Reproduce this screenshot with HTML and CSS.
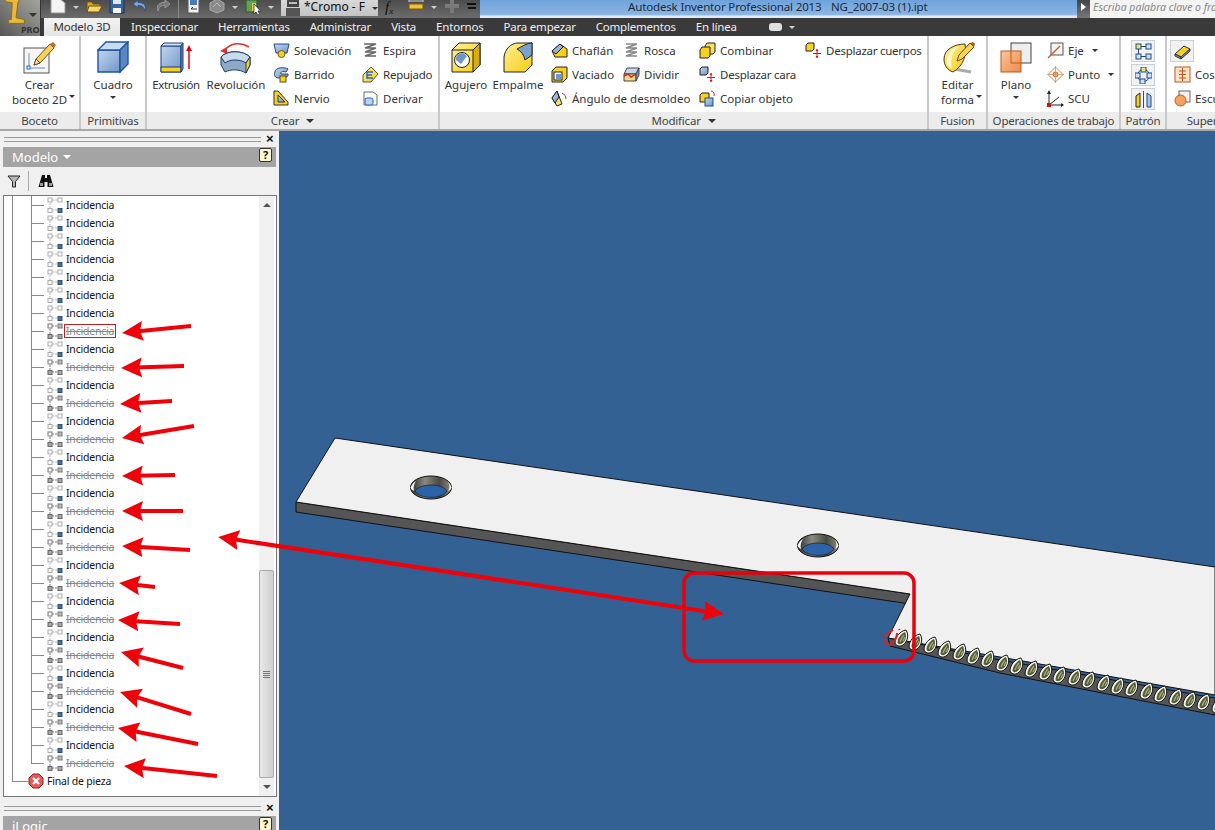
FILE: index.html
```html
<!DOCTYPE html>
<html lang="es">
<head>
<meta charset="utf-8">
<title>Autodesk Inventor Professional 2013</title>
<link rel="stylesheet" href="styles.css">
</head>
<body>
<svg class="defs" width="0" height="0">
  <defs>
    <linearGradient id="b" x1="0" y1="0" x2="1" y2="1"><stop offset="0" stop-color="#c4d6ee"/><stop offset="1" stop-color="#6f95c8"/></linearGradient>
    <linearGradient id="y" x1="0" y1="0" x2="1" y2="1"><stop offset="0" stop-color="#fff09a"/><stop offset="1" stop-color="#f8cc10"/></linearGradient>
    <linearGradient id="o" x1="0" y1="0" x2="1" y2="1"><stop offset="0" stop-color="#fbc79a"/><stop offset="1" stop-color="#ee8a48"/></linearGradient>
    <linearGradient id="hole" x1="0" y1="0" x2="1" y2="0"><stop offset="0" stop-color="#2b2b28"/><stop offset=".35" stop-color="#8a8a80"/><stop offset=".7" stop-color="#4a4a44"/><stop offset="1" stop-color="#8a8a80"/></linearGradient>
    <symbol id="on" viewBox="0 0 17 16"><path d="M4 3V13H6M6 3H11M6 13H11" fill="none" stroke="#b5b5b5" stroke-dasharray="2 1"/><rect x="2" y="1" width="4" height="4" fill="#fff" stroke="#aaa"/><rect x="12" y="1" width="4" height="4" fill="#fff" stroke="#aaa"/><rect x="2" y="11.500" width="4" height="4" fill="#fff" stroke="#aaa"/><rect x="12" y="11.500" width="4" height="4" fill="#3f76a6" stroke="#2f5070"/></symbol>
    <symbol id="off" viewBox="0 0 17 16"><path d="M4 3V13H6M6 3H11M6 13H11" fill="none" stroke="#777" stroke-dasharray="2 1"/><rect x="2" y="1" width="4" height="4" fill="#fff" stroke="#777"/><rect x="12" y="1" width="4" height="4" fill="#bbb" stroke="#777"/><rect x="2" y="11.500" width="4" height="4" fill="#aaa" stroke="#666"/><rect x="12" y="11.500" width="4" height="4" fill="#aaa" stroke="#666"/></symbol>
    <symbol id="tooth" viewBox="0 -3 15 22"><path d="M1 13C1 7 6 1 12 0C15 5 14 11 9 15C6 17 2 16 1 13Z" fill="#f5f5f0" stroke="#111"/><path d="M3.500 13C3.500 8 7 4 11 2C13 6 12 11 8 13.500C6.500 14.500 5 14.500 3.500 13Z" fill="#535c34"/><path d="M6 12C7 9 8 7 10 5M9 11C10 9 10.500 8 11 7" fill="none" stroke="#a8ae88" stroke-width="1.200"/></symbol>
    <marker id="ah" viewBox="0 0 21 20" refX="7" refY="10" markerWidth="21" markerHeight="20" markerUnits="userSpaceOnUse" orient="auto-start-reverse"><path d="M21 10L0 0L3 10L0 20Z" fill="#f00008"/></marker>
  </defs>
</svg>

<header class="titlebar">
  <div class="qa">
    <svg class="qi" viewBox="0 0 16 16"><path d="M1 1H10L15 5V15H1Z" fill="#f4f4f4" stroke="#999"/></svg><i class="caret lt"></i>
    <svg class="qi" viewBox="0 0 16 16"><path d="M1 4H6L7 6H14V13H1Z" fill="#d9a930" stroke="#6e5210"/><path d="M3 8H16L13 14H1Z" fill="#f5d86a" stroke="#6e5210"/></svg>
    <svg class="qi" viewBox="0 0 16 16"><path d="M1 1H15V15H1Z" fill="#3a659c" stroke="#1d3358"/><rect x="4" y="1" width="8" height="5" fill="#dfe7f2"/><rect x="4" y="10" width="8" height="5" fill="#f4f4f4"/></svg>
    <svg class="qi" viewBox="0 0 16 16"><path d="M6 2L1 6L6 10V7.500C10 7.500 12 9 13 13C15 8 12 4 6 4.500Z" fill="#7fa5d6" stroke="#2e5486"/></svg>
    <svg class="qi" viewBox="0 0 16 16"><path d="M10 2L15 6L10 10V7.500C6 7.500 4 9 3 13C1 8 4 4 10 4.500Z" fill="#777" stroke="#999"/></svg>
    <i class="qsep"></i>
    <svg class="qi" viewBox="0 0 16 16"><rect x="2" y="0" width="11" height="15" fill="#f2f2f2" stroke="#555"/><rect x="4" y="2" width="7" height="5" fill="#4a7ab5"/><path d="M5 11H11M5 11L7 9" stroke="#333" fill="none"/></svg>
    <svg class="qi" viewBox="0 0 16 16"><path d="M1 5L8 1L15 5V12L8 15L1 12Z" fill="#8a8a8a" stroke="#a8a8a8"/><path d="M4 9L8 5L12 9" stroke="#bbb" fill="none"/></svg><i class="caret lt"></i>
    <svg class="qi" viewBox="0 0 16 16"><rect x="1" y="2" width="11" height="12" fill="#62a052" stroke="#2f5a2a"/><rect x="7" y="5" width="4" height="8" fill="#e9c23a"/><path d="M9 6V16L11 14L13 17L14.500 16L13 13L15.500 13Z" fill="#fff" stroke="#222" stroke-width=".7"/></svg><i class="caret lt"></i>
    <div class="combo"><svg class="qi" viewBox="0 0 16 16"><rect x="2" y="0" width="12" height="7" fill="#444"/><rect x="4" y="2" width="8" height="2" fill="#bbb"/><rect x="1" y="8" width="14" height="8" fill="#555"/></svg><span class="combo-text">*Cromo - F</span><i class="caret dk"></i></div>
    <span class="fx">f<sub>x</sub></span>
    <svg class="qi" viewBox="0 0 16 16"><rect x="1" y="6" width="14" height="5" fill="#f0c232" stroke="#7a5a10"/><path d="M1 2V4M15 2V4M1 3H15" stroke="#ccc" fill="none"/></svg><i class="caret lt"></i>
    <svg class="qi" viewBox="0 0 16 16"><path d="M6 1H10V6H15V10H10V15H6V10H1V6H6Z" fill="#7a7a7a"/></svg>
    <i class="qmore"></i>
  </div>
  <div class="title"><span class="t1">Autodesk Inventor Professional 2013</span><span class="t2">NG_2007-03 (1).ipt</span></div>
  <div class="searcharrow"></div>
  <div class="search">Escriba palabra clave o frase</div>
</header>

<nav class="tabs">
  <span class="tab active">Modelo 3D</span>
  <span class="tab">Inspeccionar</span>
  <span class="tab">Herramientas</span>
  <span class="tab">Administrar</span>
  <span class="tab">Vista</span>
  <span class="tab">Entornos</span>
  <span class="tab">Para empezar</span>
  <span class="tab">Complementos</span>
  <span class="tab">En línea</span>
  <span class="pill"></span><i class="caret lt"></i>
</nav>

<div class="appbtn">
  <svg class="appicon" viewBox="0 0 30 32"><path d="M3 0H19L17 4L15 20L24 22V26H7V22H10L11 4L4 3Z" fill="#e9b93a" stroke="#8a6c1c"/></svg>
  <i class="caret dk app-caret"></i>
  <span class="pro">PRO</span>
</div>

<section class="ribbon">
  <div class="panel p-boceto">
    <div class="pbody center">
      <div class="big">
        <svg class="bigi" width="36" height="34" viewBox="0 0 36 34"><rect x="3" y="7" width="25" height="25" fill="#f6f6f6" stroke="#555"/><path d="M8 12V27H24" fill="none" stroke="#6d8fb8"/><rect x="6" y="25" width="3" height="3" fill="#fff" stroke="#1b6fc0"/><path d="M13 24L15 18L29 3L33 7L19 22Z" fill="#f8d25a" stroke="#6a4c14"/><path d="M13 24L15 18L19 22Z" fill="#fbe9c0" stroke="#6a4c14"/><path d="M29 3L33 7L35 4L32 1Z" fill="#c86a3a"/></svg>
        <span class="lbl">Crear</span><span class="lbl">boceto 2D<i class="caret dk sup"></i></span>
      </div>
    </div>
    <div class="pfoot">Boceto</div>
  </div>

  <div class="panel p-prim">
    <div class="pbody center">
      <div class="big">
        <svg class="bigi" width="32" height="34" viewBox="0 0 32 34"><path d="M1 9H23V31H1Z" fill="url(#b)" stroke="#1c55a8" stroke-width="1.400"/><path d="M1 9L9 1H31L23 9Z" fill="#c9dcf2" stroke="#1c55a8" stroke-width="1.400"/><path d="M23 9L31 1V23L23 31Z" fill="#5c86bd" stroke="#1c55a8" stroke-width="1.400"/></svg>
        <span class="lbl">Cuadro</span><i class="caret dk below"></i>
      </div>
    </div>
    <div class="pfoot">Primitivas</div>
  </div>

  <div class="panel p-crear">
    <div class="pbody">
      <div class="big w48">
        <svg class="bigi" width="34" height="34" viewBox="0 0 34 34"><path d="M2 5H22V31H2Z" fill="url(#b)" stroke="#1c3f78"/><path d="M2 26H22V31H2Z" fill="#f8d020" stroke="#1c3f78"/><path d="M2 5L5 2H24L22 5Z" fill="#d3e1f3" stroke="#1c3f78"/><path d="M22 5L24 2V28L22 31Z" fill="#6f90be" stroke="#1c3f78"/><path d="M30 28V8" stroke="#e00010" stroke-width="1.500"/><path d="M27 10L30 4L33 10Z" fill="#e00010"/></svg>
        <span class="lbl tight">Extrusión</span>
      </div>
      <div class="big w60">
        <svg class="bigi" width="34" height="34" viewBox="0 0 34 34"><path d="M5 10C12 1 22 1 30 6" fill="none" stroke="#d8342c" stroke-width="1.500"/><path d="M1 10L8 6L8 13Z" fill="#d8342c"/><path d="M2 16C8 9 24 9 31 16L31 24L27 32C20 28 12 28 6 31L2 24Z" fill="#8ea9c7" stroke="#1f3c66"/><path d="M2 16C8 9 24 9 31 16L27 22C21 18 11 18 6 22Z" fill="#c8daee" stroke="#1f3c66"/><path d="M27 22L31 16V24L27 32Z" fill="#f9d31d" stroke="#1f3c66"/></svg>
        <span class="lbl">Revolución</span>
      </div>
      <div class="col w89 ml7">
        <div class="small"><svg class="si" viewBox="0 0 17 17"><path d="M1 2H16L14 11H3Z" fill="url(#b)" stroke="#1d4b8a"/><circle cx="8.500" cy="12" r="3.500" fill="#f8d020" stroke="#6e5a10"/></svg>Solevación</div>
        <div class="small"><svg class="si" viewBox="0 0 17 17"><path d="M2 6C2 1 12 1 15 3L13 6C9 5 7 6 8 8L15 8C16 11 12 12 5 12C1 11 1 8 2 6Z" fill="url(#b)" stroke="#22466f"/><rect x="7" y="10" width="6" height="6" fill="#f8d020" stroke="#5e4e10"/></svg>Barrido</div>
        <div class="small"><svg class="si" viewBox="0 0 17 17"><path d="M1 15V1H5L15 12V15Z" fill="#f8d020" stroke="#333"/><path d="M5 11V5L12 12H5Z" fill="url(#b)" stroke="#333"/></svg>Nervio</div>
      </div>
      <div class="col">
        <div class="small"><svg class="si" viewBox="0 0 17 17"><path d="M2 2H14L3 6H14L3 10H14L3 14H14" fill="none" stroke="#666" stroke-width="1.400"/></svg>Espira</div>
        <div class="small tight"><svg class="si" viewBox="0 0 17 17"><path d="M1 9L9 1L16 8L9 16H1Z" fill="url(#y)" stroke="#555"/><path d="M5 6H11M5 6V12H11M5 9H10" fill="none" stroke="#2a66c0" stroke-width="1.500"/></svg>Repujado</div>
        <div class="small"><svg class="si" viewBox="0 0 17 17"><path d="M2 2H11L15 5V15H2Z" fill="#fff" stroke="#666"/><rect x="3" y="8" width="8" height="7" rx="2" fill="#bcd3ee" stroke="#2a66c0"/></svg>Derivar</div>
      </div>
    </div>
    <div class="pfoot">Crear <i class="caret dk"></i></div>
  </div>

  <div class="panel p-mod">
    <div class="pbody">
      <div class="big w42">
        <svg class="bigi" width="30" height="34" viewBox="0 0 30 34"><path d="M1 9L8 2H29V24L22 31H1Z" fill="url(#y)" stroke="#222"/><path d="M22 9L29 2V24L22 31Z" fill="#d8ac10" stroke="#222"/><path d="M1 9H22" stroke="#222"/><circle cx="11" cy="19" r="7.500" fill="#fff" stroke="#222"/><path d="M5 19A6 6 0 0 1 16 15L10 23Z" fill="#7196c6"/></svg>
        <span class="lbl">Agujero</span>
      </div>
      <div class="big w50">
        <svg class="bigi" width="30" height="34" viewBox="0 0 30 34"><path d="M1 31V16C2 8 8 2 15 2H29V24L22 31Z" fill="url(#y)" stroke="#222"/><path d="M14 8C18 6 24 2 29 2V14L22 19C21 14 18 10 14 8Z" fill="#7d9fcb" stroke="#222"/></svg>
        <span class="lbl">Empalme</span>
      </div>
      <div class="col w72 ml8">
        <div class="small"><svg class="si" viewBox="0 0 17 17"><path d="M1 9L9 2L16 7V15H4Z" fill="#f8d020" stroke="#222"/><path d="M1 9L9 2L12 5L5 12Z" fill="url(#b)" stroke="#222"/></svg>Chaflán</div>
        <div class="small"><svg class="si" viewBox="0 0 17 17"><path d="M1 5L5 1H16V12L12 16H1Z" fill="#f8d020" stroke="#222"/><rect x="3" y="6" width="8" height="8" fill="#fff" stroke="#222"/><rect x="5" y="8" width="5" height="5" fill="#7196c6"/></svg>Vaciado</div>
        <div class="small"><svg class="si" viewBox="0 0 17 17"><path d="M1 8L6 1L11 14L6 16Z" fill="#f8e060" stroke="#222"/><path d="M1 8L6 1L8 7L4 13Z" fill="url(#b)" stroke="#222"/><path d="M11 3C13 4 15 6 15 9" fill="none" stroke="#d02020"/></svg>Ángulo de desmoldeo</div>
      </div>
      <div class="col w75 rosca">
        <div class="small"><svg class="si" viewBox="0 0 17 17"><path d="M3 2H14L3 6H14L3 10H14L3 14H14" fill="none" stroke="#888" stroke-width="1.600"/></svg>Rosca</div>
        <div class="small"><svg class="si" viewBox="0 0 17 17"><path d="M4 2H16L13 8H1Z" fill="#c3d7ee" stroke="#444"/><path d="M1 8H13V15H1Z" fill="#f8d880" stroke="#444"/><path d="M1 10L5 8L8 11L13 8" fill="none" stroke="#d02020" stroke-width="1.400"/><path d="M13 8L16 2V9L13 15Z" fill="#7196c6" stroke="#444"/></svg>Dividir</div>
        <div class="small"></div>
      </div>
      <div class="col w107">
        <div class="small"><svg class="si" viewBox="0 0 17 17"><path d="M6 4L8 1H16V10L14 12H6Z" fill="#f8e060" stroke="#222"/><path d="M1 8L3 5H11V14L9 16H1Z" fill="#f8d020" stroke="#222"/></svg>Combinar</div>
        <div class="small tight"><svg class="si" viewBox="0 0 17 17"><path d="M1 3L3 1H9V7L7 9H1Z" fill="url(#b)" stroke="#222"/><path d="M12 7V16M8 11.500H16" stroke="#e01010"/><path d="M10.500 9L12 7L13.500 9ZM10.500 14L12 16L13.500 14Z" fill="#e01010"/></svg>Desplazar cara</div>
        <div class="small"><svg class="si" viewBox="0 0 17 17"><path d="M1 5L3 3H10V10L8 12H1Z" fill="#f8d020" stroke="#222"/><rect x="6" y="8" width="8" height="8" fill="url(#b)" stroke="#1d4b8a"/><path d="M12 1C14 1 16 3 15 6" fill="none" stroke="#d02020"/></svg>Copiar objeto</div>
      </div>
      <div class="col">
        <div class="small tight"><svg class="si" viewBox="0 0 17 17"><path d="M1 3L3 1H9V7L7 9H1Z" fill="#f8d020" stroke="#222"/><path d="M12 7V16M8 11.500H16" stroke="#e01010"/><path d="M10.500 9L12 7L13.500 9ZM10.500 14L12 16L13.500 14Z" fill="#e01010"/></svg>Desplazar cuerpos</div>
      </div>
    </div>
    <div class="pfoot">Modificar <i class="caret dk"></i></div>
  </div>

  <div class="panel p-fus">
    <div class="pbody center">
      <div class="big">
        <svg class="bigi" width="34" height="34" viewBox="0 0 34 34"><path d="M8 27L30 31" stroke="#aaa" stroke-width="3"/><path d="M3 18C3 8 14 3 24 3C26 15 22 25 12 31C6 29 3 24 3 18Z" fill="url(#y)" stroke="#443a18"/><path d="M6 18C7 11 12 7 17 6C11 11 9 20 11 28C7 26 5 22 6 18Z" fill="#fff8c8"/><path d="M16 20L18 14L29 2L33 6L21 18Z" fill="#f8d25a" stroke="#6a4c14"/><path d="M29 2L33 6L34 3L32 1Z" fill="#b4582c"/></svg>
        <span class="lbl">Editar</span><span class="lbl">forma<i class="caret dk sup"></i></span>
      </div>
    </div>
    <div class="pfoot">Fusion</div>
  </div>

  <div class="panel p-ops">
    <div class="pbody flush">
      <div class="big w56">
        <svg class="bigi" width="32" height="34" viewBox="0 0 32 34"><rect x="11" y="2" width="20" height="20" fill="#eeeeee" stroke="#444"/><rect x="1" y="10" width="20" height="21" fill="url(#o)" stroke="#b85a20"/><path d="M11 10V22H21" fill="none" stroke="#b85a20"/></svg>
        <span class="lbl">Plano</span><i class="caret dk below"></i>
      </div>
      <div class="col ml3">
        <div class="small"><svg class="si" viewBox="0 0 17 17"><rect x="4" y="1" width="12" height="12" fill="#f4f4f4" stroke="#555"/><path d="M1 16L13 4" stroke="#c8602a" stroke-width="1.500"/></svg>Eje<i class="caret dk opt"></i></div>
        <div class="small"><svg class="si" viewBox="0 0 17 17"><path d="M8.500 1L16 8.500L8.500 16L1 8.500Z" fill="none" stroke="#d08a50"/><circle cx="8.500" cy="8.500" r="2.500" fill="#f8c080" stroke="#c8602a"/><path d="M8.500 0V17M0 8.500H17" stroke="#d08a50" stroke-width=".7"/></svg>Punto<i class="caret dk opt"></i></div>
        <div class="small"><svg class="si" viewBox="0 0 17 17"><path d="M2 15V2M2 15L16 15M2 15L12 7" stroke="#222" fill="none"/><path d="M0 4L2 0L4 4ZM14 13L17 15L14 17Z" fill="#222"/><rect x="0" y="13" width="4" height="4" fill="#d01010"/></svg>SCU</div>
      </div>
    </div>
    <div class="pfoot">Operaciones de trabajo</div>
  </div>

  <div class="panel p-pat">
    <div class="pbody col-stack">
      <div class="tbtn"><svg class="si" viewBox="0 0 17 17"><rect x="1" y="1" width="5" height="5" fill="#f8e060" stroke="#1d4b8a"/><rect x="11" y="1" width="5" height="5" fill="#d3e1f3" stroke="#1d4b8a"/><rect x="1" y="11" width="5" height="5" fill="#d3e1f3" stroke="#1d4b8a"/><rect x="11" y="11" width="5" height="5" fill="#d3e1f3" stroke="#1d4b8a"/><path d="M6 3.500H11M3.500 6V11M6 13.500H11" stroke="#1d4b8a"/></svg></div>
      <div class="tbtn"><svg class="si" viewBox="0 0 17 17"><circle cx="8.500" cy="8.500" r="6" fill="none" stroke="#1d4b8a"/><rect x="6" y="0" width="5" height="5" fill="#f8e060" stroke="#1d4b8a"/><rect x="0" y="6" width="5" height="5" fill="#d3e1f3" stroke="#1d4b8a"/><rect x="12" y="6" width="5" height="5" fill="#d3e1f3" stroke="#1d4b8a"/><rect x="5" y="12" width="5" height="5" fill="#d3e1f3" stroke="#1d4b8a"/></svg></div>
      <div class="tbtn"><svg class="si" viewBox="0 0 17 17"><path d="M1 5L5 2V16H1Z" fill="#f8d020" stroke="#222"/><path d="M16 5L12 2V16H16Z" fill="#a9c3e4" stroke="#1d4b8a"/><path d="M8.500 0V17" stroke="#d01010"/></svg></div>
    </div>
    <div class="pfoot">Patrón</div>
  </div>

  <div class="panel p-sup">
    <div class="pbody col-stack sup-body">
      <div class="tbtn"><svg class="si" viewBox="0 0 17 17"><path d="M1 11L10 3L16 6L7 14Z" fill="#f8d020" stroke="#333"/><path d="M1 11L7 14V16L1 13Z" fill="#6f95c8" stroke="#333"/><path d="M7 14L16 6V8L7 16Z" fill="#6f95c8" stroke="#333"/></svg></div>
      <div class="small"><svg class="si" viewBox="0 0 17 17"><rect x="1" y="1" width="15" height="15" fill="#fbe2c8" stroke="#b85a20"/><path d="M8.500 2V15M5 5H12M5 8.500H12M5 12H12" stroke="#b85a20"/></svg>Cos</div>
      <div class="small"><svg class="si" viewBox="0 0 17 17"><rect x="5" y="1" width="11" height="11" fill="#f0f0f0" stroke="#666"/><circle cx="6.500" cy="10.500" r="5.500" fill="#f4a460" stroke="#b85a20"/></svg>Escu</div>
    </div>
    <div class="pfoot">Super</div>
  </div>
</section>

<main class="main">
  <aside class="sidebar">
    <div class="grip"><span class="griplines"></span><b class="close">×</b></div>
    <div class="phead"><span>Modelo</span><i class="caret wh"></i><span class="help">?</span></div>
    <div class="tools">
      <svg width="14" height="13" viewBox="0 0 14 13"><path d="M1 1H13L8.500 6.500V12H5.500V6.500Z" fill="#b8b8b8" stroke="#222"/></svg>
      <i class="toolsep"></i>
      <svg width="16" height="15" viewBox="0 0 16 15"><path d="M4 1H7V4H9V1H12L15.500 13H9.500V8H6.500V13H.5Z" fill="#111"/><rect x="2" y="9" width="3" height="3" fill="#999"/><rect x="11" y="9" width="3" height="3" fill="#999"/></svg>
    </div>
    <div class="treebox">
      <div class="tree">
        <div class="row"><svg class="ti"><use href="#on"/></svg><span>Incidencia</span></div>
        <div class="row"><svg class="ti"><use href="#on"/></svg><span>Incidencia</span></div>
        <div class="row"><svg class="ti"><use href="#on"/></svg><span>Incidencia</span></div>
        <div class="row"><svg class="ti"><use href="#on"/></svg><span>Incidencia</span></div>
        <div class="row"><svg class="ti"><use href="#on"/></svg><span>Incidencia</span></div>
        <div class="row"><svg class="ti"><use href="#on"/></svg><span>Incidencia</span></div>
        <div class="row"><svg class="ti"><use href="#on"/></svg><span>Incidencia</span></div>
        <div class="row"><svg class="ti"><use href="#off"/></svg><span class="sup-t sel">Incidencia</span></div>
        <div class="row"><svg class="ti"><use href="#on"/></svg><span>Incidencia</span></div>
        <div class="row"><svg class="ti"><use href="#off"/></svg><span class="sup-t">Incidencia</span></div>
        <div class="row"><svg class="ti"><use href="#on"/></svg><span>Incidencia</span></div>
        <div class="row"><svg class="ti"><use href="#off"/></svg><span class="sup-t">Incidencia</span></div>
        <div class="row"><svg class="ti"><use href="#on"/></svg><span>Incidencia</span></div>
        <div class="row"><svg class="ti"><use href="#off"/></svg><span class="sup-t">Incidencia</span></div>
        <div class="row"><svg class="ti"><use href="#on"/></svg><span>Incidencia</span></div>
        <div class="row"><svg class="ti"><use href="#off"/></svg><span class="sup-t">Incidencia</span></div>
        <div class="row"><svg class="ti"><use href="#on"/></svg><span>Incidencia</span></div>
        <div class="row"><svg class="ti"><use href="#off"/></svg><span class="sup-t">Incidencia</span></div>
        <div class="row"><svg class="ti"><use href="#on"/></svg><span>Incidencia</span></div>
        <div class="row"><svg class="ti"><use href="#off"/></svg><span class="sup-t">Incidencia</span></div>
        <div class="row"><svg class="ti"><use href="#on"/></svg><span>Incidencia</span></div>
        <div class="row"><svg class="ti"><use href="#off"/></svg><span class="sup-t">Incidencia</span></div>
        <div class="row"><svg class="ti"><use href="#on"/></svg><span>Incidencia</span></div>
        <div class="row"><svg class="ti"><use href="#off"/></svg><span class="sup-t">Incidencia</span></div>
        <div class="row"><svg class="ti"><use href="#on"/></svg><span>Incidencia</span></div>
        <div class="row"><svg class="ti"><use href="#off"/></svg><span class="sup-t">Incidencia</span></div>
        <div class="row"><svg class="ti"><use href="#on"/></svg><span>Incidencia</span></div>
        <div class="row"><svg class="ti"><use href="#off"/></svg><span class="sup-t">Incidencia</span></div>
        <div class="row"><svg class="ti"><use href="#on"/></svg><span>Incidencia</span></div>
        <div class="row"><svg class="ti"><use href="#off"/></svg><span class="sup-t">Incidencia</span></div>
        <div class="row"><svg class="ti"><use href="#on"/></svg><span>Incidencia</span></div>
        <div class="row last"><svg class="ti"><use href="#off"/></svg><span class="sup-t">Incidencia</span></div>
        <div class="row final">
          <svg class="stop" width="16" height="16" viewBox="0 0 16 16"><path d="M5 1H11L15 5V11L11 15H5L1 11V5Z" fill="#e85a5a" stroke="#8a2020"/><path d="M5 5L11 11M11 5L5 11" stroke="#fff" stroke-width="2.200"/></svg>
          <span>Final de pieza</span>
        </div>
      </div>
      <div class="scroll">
        <i class="sarrow up"></i>
        <div class="strack"><div class="sthumb"><i class="sgrip"></i></div></div>
        <i class="sarrow down"></i>
      </div>
    </div>
    <div class="grip grip2"><span class="griplines"></span><b class="close">×</b></div>
    <div class="phead"><span>iLogic</span><span class="help">?</span></div>
  </aside>
  <div class="viewport">
    <svg class="scene" viewBox="279 131 936 699" width="936" height="699">
      <path d="M296 502V512L910 604V594Z" fill="#555" stroke="#111"/>
      <path d="M335 438L296 502L910 594L888 638L1000 657L1215 695V567Z" fill="#f0f0f0" stroke="#111"/>
      <path d="M888 638L890 646L1000 673L1215 715V698L1000 660Z" fill="#555" stroke="#111"/>
      <ellipse cx="431" cy="487.500" rx="20.500" ry="11.500" fill="url(#hole)" stroke="#111"/>
      <path d="M410.500 487.500C412 484 414 482 416 481C414 484 413 487 414 491C412 490 411 489 410.500 487.500ZM451.500 487.500C450 484 449 483 448 482C450 485 450 488 448 491C450 490 451 489 451.500 487.500Z" fill="#f8f8f8"/>
      <path d="M415 491C420 483 442 483 447 491C442 499.500 420 499.500 415 491Z" fill="#2c62a8" stroke="#111" stroke-width=".6"/>
      <ellipse cx="818" cy="545.500" rx="20.500" ry="11.500" fill="url(#hole)" stroke="#111"/>
      <path d="M797.500 545.500C799 542 801 540 803 539C801 542 800 545 801 549C799 548 798 547 797.500 545.500ZM838.500 545.500C837 542 836 541 835 540C837 543 837 546 835 549C837 548 838 547 838.500 545.500Z" fill="#f8f8f8"/>
      <path d="M802 549C807 541 829 541 834 549C829 557.500 807 557.500 802 549Z" fill="#2c62a8" stroke="#111" stroke-width=".6"/>
      <use href="#tooth" x="894" y="627" width="15" height="22"/><use href="#tooth" x="908" y="631" width="15" height="22"/><use href="#tooth" x="923" y="634" width="15" height="22"/><use href="#tooth" x="937" y="638" width="15" height="22"/><use href="#tooth" x="952" y="641" width="15" height="22"/><use href="#tooth" x="966" y="645" width="15" height="22"/><use href="#tooth" x="980" y="648" width="15" height="22"/><use href="#tooth" x="995" y="652" width="15" height="22"/><use href="#tooth" x="1009" y="655" width="15" height="22"/><use href="#tooth" x="1024" y="658" width="15" height="22"/><use href="#tooth" x="1038" y="661" width="15" height="22"/><use href="#tooth" x="1052" y="664" width="15" height="22"/><use href="#tooth" x="1067" y="666" width="15" height="22"/><use href="#tooth" x="1081" y="669" width="15" height="22"/><use href="#tooth" x="1096" y="672" width="15" height="22"/><use href="#tooth" x="1110" y="675" width="15" height="22"/><use href="#tooth" x="1124" y="677" width="15" height="22"/><use href="#tooth" x="1139" y="680" width="15" height="22"/><use href="#tooth" x="1153" y="683" width="15" height="22"/><use href="#tooth" x="1168" y="686" width="15" height="22"/><use href="#tooth" x="1182" y="689" width="15" height="22"/><use href="#tooth" x="1196" y="691" width="15" height="22"/><use href="#tooth" x="1211" y="694" width="15" height="22"/>
    </svg>
  </div>
</main>

<svg class="annot" viewBox="0 0 1215 830" width="1215" height="830">
  <g class="arrows">
    <line x1="191" y1="326" x2="136" y2="331.600" marker-end="url(#ah)"/>
    <line x1="184" y1="366" x2="135" y2="367.600" marker-end="url(#ah)"/>
    <line x1="172" y1="401" x2="134" y2="403.200" marker-end="url(#ah)"/>
    <line x1="194" y1="426" x2="135.800" y2="435.700" marker-end="url(#ah)"/>
    <line x1="175" y1="475" x2="136" y2="475.700" marker-end="url(#ah)"/>
    <line x1="183" y1="511" x2="136" y2="511" marker-end="url(#ah)"/>
    <line x1="190" y1="550" x2="136" y2="546.800" marker-end="url(#ah)"/>
    <line x1="155" y1="587" x2="133" y2="584.500" marker-end="url(#ah)"/>
    <line x1="180" y1="624" x2="132" y2="620.900" marker-end="url(#ah)"/>
    <line x1="183" y1="668" x2="134.600" y2="655.500" marker-end="url(#ah)"/>
    <line x1="191" y1="714" x2="133.400" y2="696.100" marker-end="url(#ah)"/>
    <line x1="198" y1="744" x2="131.700" y2="730.700" marker-end="url(#ah)"/>
    <line x1="217" y1="776" x2="137.900" y2="767.500" marker-end="url(#ah)"/>
    <line x1="232" y1="539" x2="710" y2="611.900" marker-start="url(#ah)" marker-end="url(#ah)"/>
  </g>
  <rect class="redbox" x="684" y="573" width="230" height="88" rx="10"/>
  <path class="redmark" d="M883 637L893 630M897 633C897 638 894 642 890 645C887 644 885 642 884 640M899 629L899.500 630"/>
</svg>
</body>
</html>
```

FILE: styles.css
```css
* { box-sizing: border-box; }
html, body { margin: 0; padding: 0; }
body {
  width: 1215px;
  height: 830px;
  overflow: hidden;
  position: relative;
  background: #f0f0f0;
  font-family: "Noto Sans", "Open Sans", sans-serif;
  font-size: 11.5px;
  color: #333;
}
.defs { position: absolute; }
svg { display: block; flex: none; }

.caret { display: inline-block; width: 0; height: 0; border-left: 3px solid transparent; border-right: 3px solid transparent; border-top: 3px solid #333; flex: none; }
.caret.lt { border-top-color: #d0d0d0; }
.caret.dk { border-top-color: #333; }
.caret.wh { border-top-color: #fff; border-left-width: 4px; border-right-width: 4px; border-top-width: 4px; }

/* title bar */
.titlebar { display: flex; height: 18px; background: #555; }
.qa { width: 480px; flex: none; display: flex; align-items: flex-start; gap: 7px; padding-left: 50px; background: linear-gradient(#4c4c4c, #6c6c6c); overflow: hidden; }
.qa > .qi { margin-top: -2px; }
.qa > .caret { margin-top: 6px; }
.qi { width: 16px; height: 16px; }
.qsep { width: 1px; height: 18px; background: #888; }
.combo { width: 97px; height: 16px; flex: none; display: flex; align-items: center; gap: 3px; padding-left: 4px; background: linear-gradient(#d8d8d8, #c4c4c4); }
.combo-text { width: 66px; padding-right: 8px; overflow: hidden; white-space: nowrap; font-size: 12px; line-height: 13px; margin-top: -3px; color: #111; }
.fx { width: 16px; font-family: "Liberation Serif", serif; font-style: italic; font-size: 15px; line-height: 14px; color: #111; }
.fx sub { font-size: 9px; vertical-align: -2px; line-height: 0; }
.qmore { width: 9px; height: 6px; flex: none; margin-top: 3px; border-top: 2px solid #111; background: linear-gradient(#111, #111) center 2px / 8px 4px no-repeat; }
.title { flex: 1; display: flex; padding-left: 148px; background: linear-gradient(#6fa2da, #8ab5e4 80%, #dfeaf5 90%, #dfeaf5); color: #1b2a3c; font-size: 11.5px; letter-spacing: -0.15px; line-height: 14px; white-space: nowrap; }
.t1 { width: 203px; flex: none; }
.searcharrow { width: 13px; flex: none; background: linear-gradient(#444, #777); position: relative; }
.searcharrow::after { content: ""; position: absolute; left: 4px; top: 3px; border-left: 5px solid #fff; border-top: 4px solid transparent; border-bottom: 4px solid transparent; }
.search { width: 125px; flex: none; background: #f4f4f4; color: #888; font-style: italic; font-size: 10.5px; line-height: 15px; white-space: nowrap; overflow: hidden; padding-left: 3px; }

/* tabs */
.tabs { display: flex; align-items: center; height: 18px; padding-left: 44px; background: #3a3a3a; color: #f0f0f0; font-size: 11.5px; letter-spacing: -0.2px; white-space: nowrap; }
.tab { padding: 0 10px; line-height: 18px; }
.tab.active { background: linear-gradient(#f4f4f4, #e4e4e4); color: #333; width: 76px; padding: 0; text-align: center; margin-right: 1px; }
.pill { width: 13px; height: 8px; border-radius: 3px; background: #e0e0e0; margin-left: 22px; margin-right: 7px; }

.appbtn { position: absolute; left: 0; top: 0; width: 41px; height: 36px; background: linear-gradient(45deg, #565656, #a4a49e); border-right: 1px solid #333; }
.appicon { position: absolute; left: 2px; top: -1px; width: 28px; height: 30px; }
.app-caret { position: absolute; left: 29px; top: 13px; border-top-color: #222; border-left-width: 4px; border-right-width: 4px; border-top-width: 4px; }
.pro { position: absolute; left: 21px; top: 24px; font-size: 9px; line-height: 11px; font-weight: 700; color: #333; }

/* ribbon */
.ribbon { display: flex; height: 95px; background: #fff; border-bottom: 2px solid #a8a8a8; overflow: hidden; }
.panel { display: flex; flex-direction: column; flex: none; border-right: 2px solid #c8c8c8; }
.p-boceto { width: 81px; }
.p-prim { width: 66px; }
.p-crear { width: 293px; }
.p-mod { width: 489px; }
.p-fus { width: 59px; }
.p-ops { width: 133px; }
.p-pat { width: 46px; }
.p-sup { width: 70px; border-right: 0; }
.pbody { height: 76px; display: flex; padding-left: 5px; white-space: nowrap; }
.pbody.center { justify-content: center; padding-left: 0; }
.pbody.flush { padding-left: 0; }
.pfoot { height: 17px; background: #ececec; text-align: center; line-height: 17px; font-size: 11.5px; letter-spacing: -0.2px; color: #444; white-space: nowrap; overflow: hidden; }
.pfoot .caret { margin-left: 4px; vertical-align: 2px; border-left-width: 4px; border-right-width: 4px; border-top-width: 4px; }

.big { display: flex; flex-direction: column; align-items: center; padding-top: 5px; }
.bigi { margin-bottom: 2px; }
.lbl { display: block; line-height: 15px; position: relative; }
.lbl.tight { letter-spacing: -0.4px; }
.small.tight { letter-spacing: -0.25px; }
.caret.sup { position: absolute; right: -8px; top: 3px; }
.caret.below { margin-top: 4px; }
.w42 { width: 42px; }
.w48 { width: 48px; }
.w50 { width: 50px; margin-left: 6px; }
.w56 { width: 56px; }
.w60 { width: 60px; margin-left: 6px; }
.w72 { width: 72px; }
.w75 { width: 75px; }
.w89 { width: 89px; }
.w107 { width: 106px; }
.rosca { padding-right: 0; width: 76px; }
.ml3 { margin-left: 3px; }
.ml7 { margin-left: 7px; }
.ml8 { margin-left: 8px; }
.opt { margin-left: 4px; }
.col { padding-top: 2px; flex: none; }
.small { height: 24px; display: flex; align-items: center; gap: 4px; }
.si { width: 17px; height: 17px; }
.col-stack { flex-direction: column; align-items: center; padding: 4px 0 0; gap: 2px; }
.tbtn { width: 24px; height: 22px; display: flex; align-items: center; justify-content: center; background: #f2f2f2; border: 1px solid #c8d0da; flex: none; }
.sup-body { align-items: flex-start; padding-left: 3px; gap: 0; }
.sup-body .small { margin-left: 4px; }

/* main */
.main { display: flex; height: 699px; }
.sidebar { width: 279px; flex: none; background: #f0f0f0; padding: 0 3px; display: flex; flex-direction: column; overflow: hidden; }
.grip { height: 16px; flex: none; display: flex; align-items: center; gap: 5px; }
.griplines { width: 257px; height: 5px; border-top: 1px solid #999; border-bottom: 1px solid #999; margin-left: 1px; }
.close { font-size: 13px; line-height: 14px; color: #111; font-family: "Liberation Sans", sans-serif; }
.phead { height: 20px; flex: none; display: flex; align-items: center; gap: 5px; padding-left: 9px; background: #a4a4a4; color: #fff; font-size: 13px; position: relative; }
.help { position: absolute; left: 256px; top: 1px; width: 13px; height: 14px; border: 1px solid #333; border-radius: 2px; background: #fff8d0; color: #111; font-size: 11px; line-height: 12px; font-weight: 700; text-align: center; }
.tools { height: 28px; flex: none; display: flex; align-items: center; padding-left: 4px; }
.toolsep { width: 1px; height: 20px; background: #aaa; margin: 0 9px 0 7px; }
.treebox { height: 602px; flex: none; display: flex; background: #fff; border: 1px solid #777; overflow: hidden; width: 274px; }
.tree { width: 255px; flex: none; color: #111; font-family: "Noto Sans", sans-serif; font-size: 10.5px; letter-spacing: -0.2px; }
.row {
  height: 18px;
  display: flex;
  align-items: center;
  padding-left: 42px;
  background:
    linear-gradient(#888, #888) 8px 0 / 1px 100% no-repeat,
    linear-gradient(#888, #888) 27px 0 / 1px 100% no-repeat,
    linear-gradient(#888, #888) 27px 50% / 13px 1px no-repeat;
}
.row.last {
  background:
    linear-gradient(#888, #888) 8px 0 / 1px 100% no-repeat,
    linear-gradient(#888, #888) 27px 0 / 1px 50% no-repeat,
    linear-gradient(#888, #888) 27px 50% / 13px 1px no-repeat;
}
.row.final {
  padding-left: 24px;
  background:
    linear-gradient(#888, #888) 8px 0 / 1px 50% no-repeat,
    linear-gradient(#888, #888) 8px 50% / 16px 1px no-repeat;
}
.ti { width: 17px; height: 16px; margin-right: 3px; }
.stop { margin-right: 3px; }
.sup-t { color: #888; text-decoration: line-through; }
.sel { outline: 1px solid #c02020; outline-offset: 0; padding: 0 1px; margin-left: -1px; line-height: 12px; }
.grip2 { margin-top: 3px; }

.scroll { width: 15px; flex: none; margin-left: 0; background: #f0f0f0; display: flex; flex-direction: column; align-items: center; }
.sarrow { height: 16px; flex: none; width: 0; border-left: 4px solid transparent; border-right: 4px solid transparent; }
.sarrow.up { border-bottom: 4px solid #555; height: 0; margin: 7px 0 5px; }
.sarrow.down { border-top: 4px solid #555; height: 0; margin: 7px 0; }
.strack { flex: 1; width: 100%; display: flex; flex-direction: column; justify-content: flex-end; }
.sthumb { height: 208px; background: linear-gradient(90deg, #e8e8e8, #cfcfcf); border: 1px solid #aaa; border-radius: 2px; display: flex; align-items: center; justify-content: center; }
.sgrip { width: 7px; height: 7px; background: repeating-linear-gradient(#777 0 1px, transparent 1px 2px); }

.viewport { flex: 1; background: #336193; overflow: hidden; }

/* annotations lying over everything */
.annot { position: absolute; left: 0; top: 0; pointer-events: none; }
.arrows line { stroke: #f00008; stroke-width: 4; }
.redbox { fill: none; stroke: #e8000c; stroke-width: 3.5; }
.redmark { fill: none; stroke: #e02020; stroke-width: 2; }
```
